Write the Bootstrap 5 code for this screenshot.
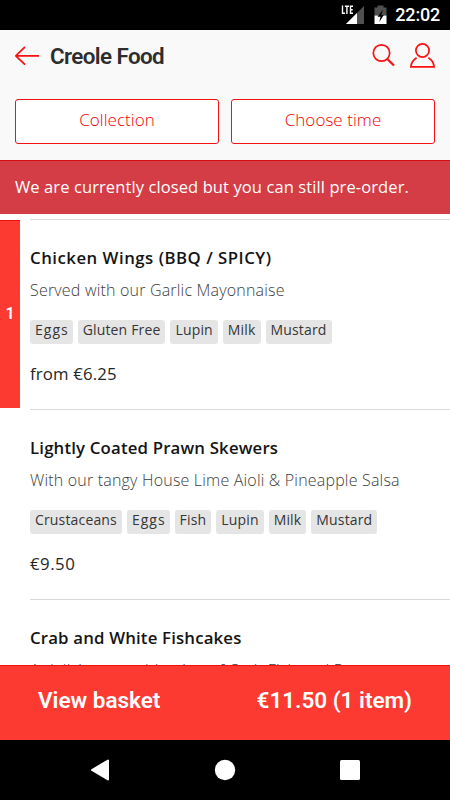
<!DOCTYPE html>
<html lang="en">
<head>
<meta charset="utf-8">
<meta name="viewport" content="width=device-width, initial-scale=1">
<title>Creole Food</title>
<link href="https://cdn.jsdelivr.net/npm/bootstrap@5.3.0/dist/css/bootstrap.min.css" rel="stylesheet">
<style>
body{font-family:"Open Sans","Noto Sans",sans-serif;color:#141414;height:800px;font-size:16.5px}
.roboto{font-family:Roboto,"Liberation Sans",sans-serif}
.status-bar{height:30px;padding-right:10px;font-size:18px;font-weight:500;line-height:30px}
.clock{margin-left:8.5px;letter-spacing:-.2px}
.top-area{height:130px;background:#f9f9f9;padding:0 15px}
.title-row{height:52px}
.page-title{font-size:22.4px;font-weight:600;color:#2d2d2d;line-height:26px;margin-left:10px;letter-spacing:-.6px}
.choice-row{gap:12px;padding-top:17px}
.choice{height:45px;border:1px solid #f31212;border-radius:3px;background:#fff;color:#f30000;font-size:17px;font-weight:300;padding:0 0 3px;line-height:38px;letter-spacing:.05px}
.notice{height:53.5px;border-top:1px solid #d60d10;background:#d43d45;color:#fff;padding-left:15px;line-height:51px;font-size:16.5px;letter-spacing:.1px}
.menu-list{padding-top:5px;height:451.5px}
.dish{height:190.2px;flex:none}
.qty{width:20px;background:#fd3a31;border-top:1px solid #f01010;margin-top:1px;margin-bottom:1px;font-size:16px;font-weight:600}
.dish-info{margin-left:10px;border-top:1px solid #d9d9d9;padding-top:26px}
.dish-bare .dish-info{margin-left:30px}
.dish-name{font-size:16.8px;line-height:24px;font-weight:600;white-space:nowrap;letter-spacing:.17px}
.dish-name.caps{letter-spacing:.5px}
.dish-text{font-size:16px;line-height:24px;margin-top:8px;color:#3c3c3c;font-weight:300;white-space:nowrap;letter-spacing:.19px}
.chips{gap:5px;margin-top:18px}
.chip{height:24px;border-radius:3px;background:#e5e5e5;font-size:14px;line-height:20px;padding:0 5px;font-weight:400;color:#363636;white-space:nowrap;letter-spacing:.16px}
.chip-wide{letter-spacing:1px;padding-right:4px}
.price{font-size:16.8px;line-height:24px;margin-top:18px;font-weight:400;color:#262626;letter-spacing:.15px}
.price-wide{letter-spacing:.5px}
.basket{height:75px;background:#fd3a31;border-top:1px solid #ef1010;padding:0 38px;font-size:22.5px;font-weight:600;line-height:68px}
.system-nav{height:60px;padding:0 90px}
</style>
</head>
<body class="d-flex flex-column overflow-hidden bg-white">
<div class="status-bar roboto bg-black text-white d-flex align-items-center justify-content-end">
<svg width="24" height="22" viewBox="341 4 24 22"><path d="M364 6V24H346Z" fill="#505050"/><path d="M357 13V24H346Z" fill="#fff"/><path d="M340 4H353.500V15H340Z" fill="#000"/><path d="M342.500 5.500V13.200H345M344.800 6.200H349M346.900 6.200V13.900M353 6.200H350.500V13.200H353M350.500 9.700H352.700" fill="none" stroke="#fff" stroke-width="1.400"/></svg>
<svg class="ms-2" width="14" height="22" viewBox="372.500 4.500 14 22"><path d="M377 6H383V8H386V16H374V8H377Z" fill="#505050"/><path d="M374 16H386V24.500H374Z" fill="#fff"/><path d="M382.500 10 377 17.200H380L378.800 22.500 383.300 15.400H380.800Z" fill="#000"/></svg>
<span class="clock">22:02</span>
</div>
<header class="top-area">
<div class="title-row d-flex align-items-center">
<svg width="25" height="20" viewBox="15 45.500 25 20" fill="none" stroke="#f91010" stroke-width="1.700" stroke-linecap="round" stroke-linejoin="round"><path d="M38.500 55.300H15.800M24.500 46.800 15.800 55.300 24.500 63.700"/></svg>
<h1 class="page-title roboto mb-0">Creole Food</h1>
<svg class="ms-auto" width="64" height="28" viewBox="371 41.500 64 28" fill="none" stroke="#f91010" stroke-width="1.700"><circle cx="381.500" cy="52.500" r="8.200"/><path d="M387.300 58.500 394 65" stroke-width="2.200"/><circle cx="422.500" cy="50" r="6.600"/><path d="M416.600 57.200C413 59.400 411.200 62.500 410.900 66.300H434.100C433.800 62.500 432 59.400 428.400 57.200"/></svg>
</div>
<div class="choice-row d-flex">
<button class="choice btn flex-fill w-50">Collection</button>
<button class="choice btn flex-fill w-50">Choose time</button>
</div>
</header>
<div class="notice text-nowrap">We are currently closed but you can still pre-order.</div>
<main class="menu-list overflow-hidden d-flex flex-column">
<article class="dish d-flex">
<div class="qty roboto text-white d-flex align-items-center justify-content-center">1</div>
<div class="dish-info flex-fill">
<div class="dish-name caps">Chicken Wings (BBQ / SPICY)</div>
<div class="dish-text">Served with our Garlic Mayonnaise</div>
<div class="chips d-flex"><span class="chip chip-wide">Eggs</span><span class="chip">Gluten Free</span><span class="chip">Lupin</span><span class="chip">Milk</span><span class="chip">Mustard</span></div>
<div class="price">from €6.25</div>
</div>
</article>
<article class="dish dish-bare d-flex">
<div class="dish-info flex-fill">
<div class="dish-name">Lightly Coated Prawn Skewers</div>
<div class="dish-text">With our tangy House Lime Aioli &amp; Pineapple Salsa</div>
<div class="chips d-flex"><span class="chip">Crustaceans</span><span class="chip chip-wide">Eggs</span><span class="chip">Fish</span><span class="chip">Lupin</span><span class="chip">Milk</span><span class="chip">Mustard</span></div>
<div class="price price-wide">€9.50</div>
</div>
</article>
<article class="dish dish-bare d-flex">
<div class="dish-info flex-fill">
<div class="dish-name">Crab and White Fishcakes</div>
<div class="dish-text">A delicious combination of Crab Fish and Prawn</div>
</div>
</article>
</main>
<div class="basket roboto text-white d-flex justify-content-between"><span>View basket</span><span>€11.50 (1 item)</span></div>
<nav class="system-nav bg-black d-flex align-items-center justify-content-between">
<svg width="20" height="22" viewBox="0 0 20 22"><path d="M18 1.500V20.500L2 11Z" fill="#fff" stroke="#fff" stroke-width="2" stroke-linejoin="round"/></svg>
<svg width="22" height="22" viewBox="0 0 22 22"><circle cx="11" cy="11" r="10.200" fill="#fff"/></svg>
<svg width="20" height="20" viewBox="0 0 20 20"><rect width="20" height="20" rx="1.500" fill="#fff"/></svg>
</nav>
<script src="https://cdn.jsdelivr.net/npm/bootstrap@5.3.0/dist/js/bootstrap.bundle.min.js"></script>
</body>
</html>
